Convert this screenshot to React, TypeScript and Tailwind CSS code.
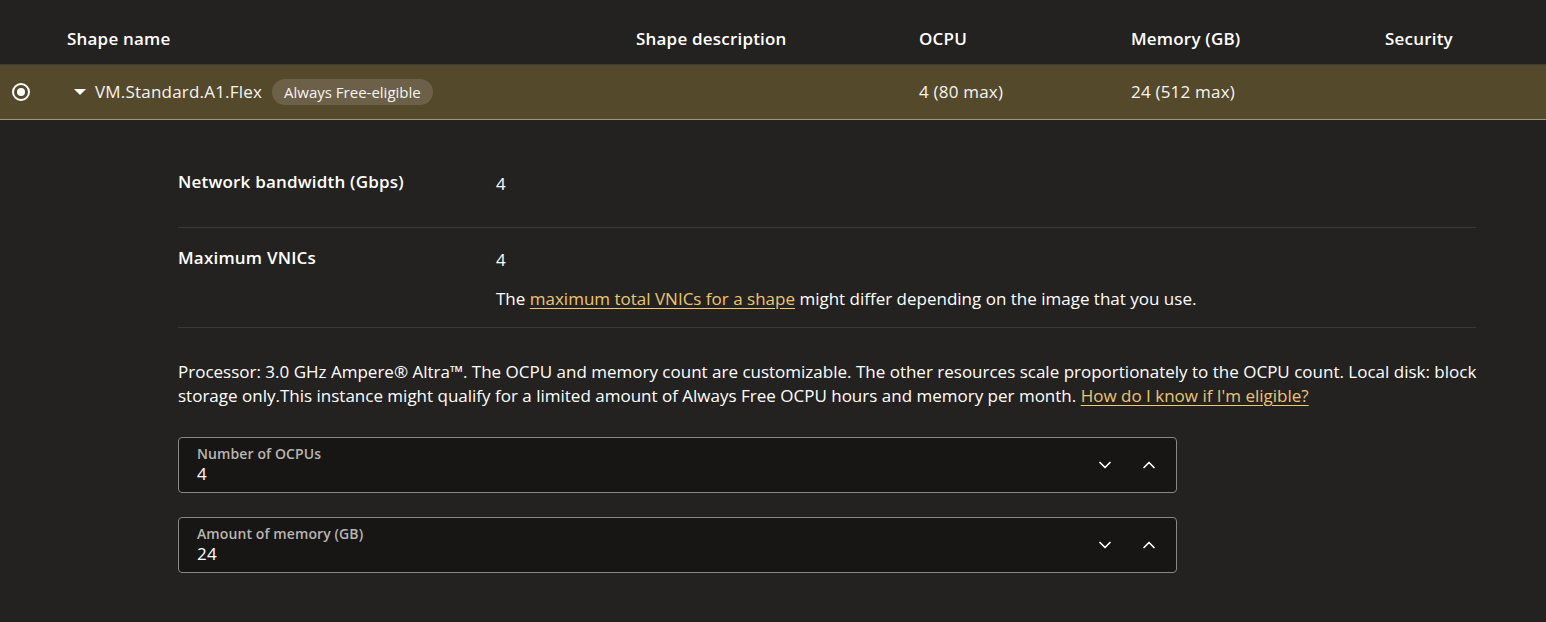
import { ChevronDown, ChevronUp } from "lucide-react";

const font = { fontFamily: '"Open Sans", "Liberation Sans", Arial, sans-serif' };

function Stepper({ label, value }: { label: string; value: string }) {
  return (
    <div className="flex h-[56px] w-[999px] items-center rounded-[4px] border border-[#8a8884] bg-[#171615] pl-[18px] pr-[17px]">
      <div className="flex flex-1 flex-col">
        <span className="text-[14px] leading-[18px] font-semibold tracking-[0.1px] text-[#b8b5b0]">{label}</span>
        <span className="text-[17px] leading-[22px] text-white">{value}</span>
      </div>
      <div className="flex items-center gap-[24px] text-white">
        <ChevronDown className="h-[20px] w-[20px]" strokeWidth={2} />
        <ChevronUp className="h-[20px] w-[20px]" strokeWidth={2} />
      </div>
    </div>
  );
}

export default function App() {
  return (
    <div
      className="h-[622px] w-[1546px] overflow-hidden bg-[#232220] text-[17px] leading-[24px] tracking-[0.2px] text-white"
      style={font}
    >
      {/* header */}
      <div className="flex h-[65px] items-center border-b border-[#3c3b38] pt-[14px] font-semibold">
        <div className="w-[67px]" />
        <div className="w-[569px]">Shape name</div>
        <div className="w-[283px]">Shape description</div>
        <div className="w-[212px]">OCPU</div>
        <div className="w-[254px]">Memory (GB)</div>
        <div>Security</div>
      </div>

      {/* selected row */}
      <div className="flex h-[55px] items-center border-b border-[#9e9889] bg-[#55492b] text-[#f6f5f2]">
        <div className="flex w-[67px] items-center pl-[12px]">
          <span className="flex h-[18px] w-[18px] items-center justify-center rounded-full border-[2px] border-white">
            <span className="h-[8px] w-[8px] rounded-full bg-white" />
          </span>
        </div>
        <div className="flex w-[852px] items-center">
          <span className="mr-[9px] ml-[7px] h-0 w-0 border-x-[6px] border-t-[6px] border-x-transparent border-t-white" />
          <span>VM.Standard.A1.Flex</span>
          <span className="ml-[10px] rounded-full bg-[#6c6049] px-[12px] py-[2px] text-[15px] leading-[22px] tracking-normal">
            Always Free-eligible
          </span>
        </div>
        <div className="w-[212px]">4 (80 max)</div>
        <div>24 (512 max)</div>
      </div>

      {/* details */}
      <div className="pl-[178px] pr-[70px]">
        <div className="flex h-[108px] border-b border-[#3a3936] pt-[50px]">
          <div className="w-[318px] font-semibold">Network bandwidth (Gbps)</div>
          <div className="pt-[2px]">4</div>
        </div>
        <div className="flex h-[100px] border-b border-[#3a3936] pt-[18px]">
          <div className="w-[318px] font-semibold">Maximum VNICs</div>
          <div className="flex flex-col gap-[15px] pt-[2px] tracking-normal">
            <div>4</div>
            <div>
              The{" "}
              <a href="#" className="text-[#ecc670] underline decoration-[#f0c865] underline-offset-[3px]">
                maximum total VNICs for a shape
              </a>{" "}
              might differ depending on the image that you use.
            </div>
          </div>
        </div>
        <p className="mt-[32px] -mr-[10px] tracking-normal">
          Processor: 3.0 GHz Ampere® Altra™. The OCPU and memory count are customizable. The other resources scale
          proportionately to the OCPU count. Local disk: block storage only.This instance might qualify for a limited
          amount of Always Free OCPU hours and memory per month.{" "}
          <a href="#" className="text-[#ecc670] underline decoration-[#f0c865] underline-offset-[3px]">
            How do I know if I'm eligible?
          </a>
        </p>
        <div className="mt-[29px] flex flex-col gap-[24px]">
          <Stepper label="Number of OCPUs" value="4" />
          <Stepper label="Amount of memory (GB)" value="24" />
        </div>
      </div>
    </div>
  );
}
